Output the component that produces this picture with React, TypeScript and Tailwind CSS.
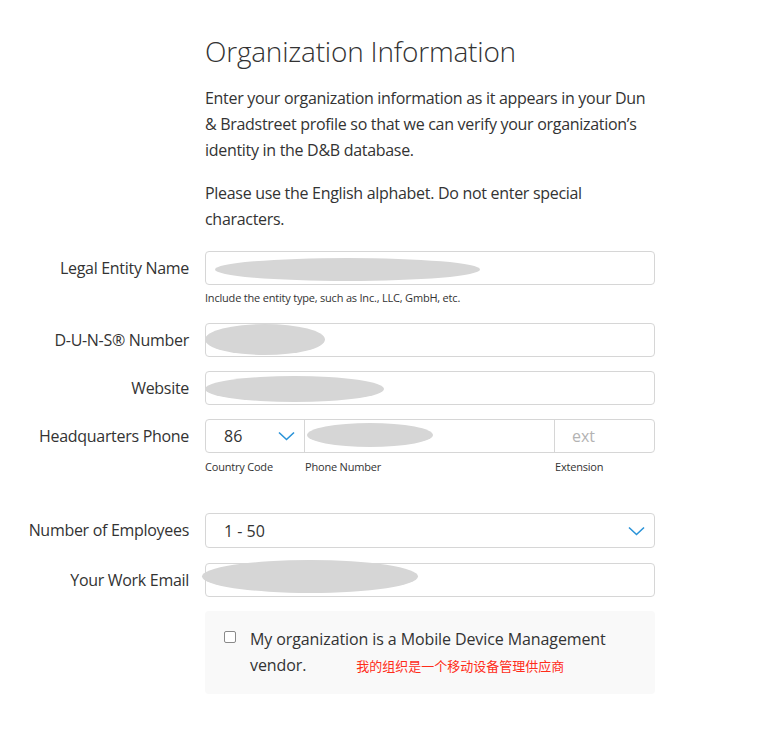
const font = { fontFamily: "'Open Sans', 'Noto Sans', 'Noto Sans CJK SC', sans-serif" };

function Blot({ className }: { className: string }) {
  return <span className={`pointer-events-none absolute rounded-[50%] bg-[#d6d6d6] ${className}`} />;
}

function Chevron() {
  return (
    <svg width="17" height="10" viewBox="0 0 17 10" fill="none" className="shrink-0">
      <polyline points="1,1.5 8.5,8.5 16,1.5" stroke="#2a93d8" strokeWidth="1.6" />
    </svg>
  );
}

function Row({
  label,
  children,
  className = "",
}: {
  label: string;
  children: React.ReactNode;
  className?: string;
}) {
  return (
    <div className={`flex items-start gap-4 ${className}`}>
      <div className="flex h-[34px] w-[189px] shrink-0 items-center justify-end text-[16px] tracking-[-0.3px] text-[#333]">
        {label}
      </div>
      <div className="w-[450px]">{children}</div>
    </div>
  );
}

function Field({ blot }: { blot?: string }) {
  return (
    <div className="relative h-[34px] rounded-[4px] border border-[#d6d6d6] bg-white">
      {blot && <Blot className={blot} />}
    </div>
  );
}

export default function App() {
  return (
    <div className="min-h-[743px] w-full bg-white pt-[33px]" style={font}>
      <div className="ml-[205px] w-[450px] text-[#333]">
        <h1 className="text-[28px] font-light leading-[36px] tracking-[-0.2px] text-[#333]">
          Organization Information
        </h1>
        <p className="mt-[16px] text-[16px] leading-[26px] tracking-[-0.3px]">
          Enter your organization information as it appears in your Dun &amp; Bradstreet profile so that we
          can verify your organization’s identity in the D&amp;B database.
        </p>
        <p className="mt-[17px] text-[16px] leading-[26px] tracking-[-0.3px]">
          Please use the English alphabet. Do not enter special characters.
        </p>
      </div>

      <div className="mt-[19px]">
        <Row label="Legal Entity Name">
          <Field blot="left-[9px] top-[6px] h-[23px] w-[265px]" />
          <div className="mt-[6px] text-[11px] leading-[14px] tracking-[-0.2px] text-[#333]">
            Include the entity type, such as Inc., LLC, GmbH, etc.
          </div>
        </Row>

        <Row label="D-U-N-S® Number" className="mt-[18px]">
          <Field blot="-left-[1px] top-0 h-[31px] w-[120px]" />
        </Row>

        <Row label="Website" className="mt-[14px]">
          <Field blot="-left-[1px] top-[4px] h-[26px] w-[179px]" />
        </Row>

        <Row label="Headquarters Phone" className="mt-[14px]">
          <div className="flex h-[34px] rounded-[4px] border border-[#d6d6d6] bg-white text-[16px] text-[#333]">
            <div className="flex w-[99px] items-center justify-between border-r border-[#d6d6d6] pl-[18px] pr-[9px]">
              <span>86</span>
              <Chevron />
            </div>
            <div className="relative w-[250px] border-r border-[#d6d6d6]">
              <Blot className="left-[2px] top-[3px] h-[24px] w-[126px]" />
            </div>
            <div className="flex flex-1 items-center pl-[17px] text-[#b3b3b3]">ext</div>
          </div>
          <div className="mt-[7px] flex text-[11px] leading-[14px] tracking-[-0.2px] text-[#333]">
            <span className="w-[100px]">Country Code</span>
            <span className="w-[250px]">Phone Number</span>
            <span>Extension</span>
          </div>
        </Row>

        <Row label="Number of Employees" className="mt-[39px]">
          <div className="flex h-[35px] items-center justify-between rounded-[4px] border border-[#d6d6d6] bg-white pl-[18px] pr-[9px] text-[16px] text-[#333]">
            <span>1 - 50</span>
            <Chevron />
          </div>
        </Row>

        <Row label="Your Work Email" className="mt-[15px]">
          <Field blot="-left-[4px] -top-[4px] h-[33px] w-[216px]" />
        </Row>

        <div className="ml-[205px] mt-[14px] flex w-[450px] gap-[14px] rounded-[4px] bg-[#f9f9f9] pb-[15px] pl-[19px] pr-[20px] pt-[15px]">
          <span className="mt-[5px] h-[12px] w-[12px] shrink-0 rounded-[2px] border border-[#8a8a8a] bg-white" />
          <p className="text-[16px] leading-[26px] tracking-[-0.1px] text-[#333]">
            My organization is a Mobile Device Management
            <br />
            vendor.
            <span className="ml-[50px] text-[13px] tracking-normal text-[#ff2d1a]">我的组织是一个移动设备管理供应商</span>
          </p>
        </div>
      </div>
    </div>
  );
}
